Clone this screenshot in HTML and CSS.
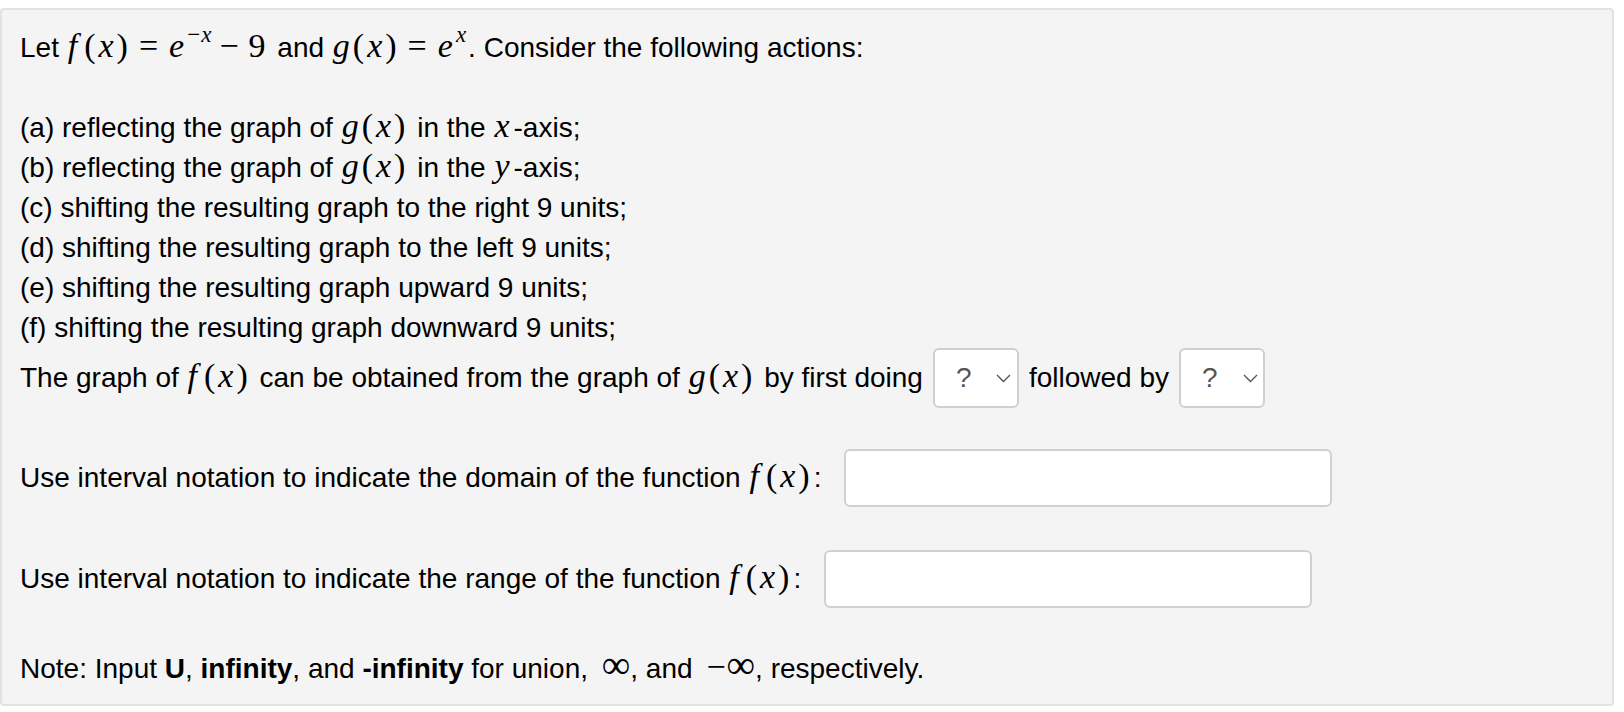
FILE: index.html
```html
<!DOCTYPE html>
<html>
<head>
<meta charset="utf-8">
<link rel="stylesheet" href="styles.css">
</head>
<body>
<div class="panel">
  <div class="line">Let <span class="m"><i class="f">f</i>(<i>x</i>)<span class="rel">=</span><i>e</i><sup>−<i>x</i></sup><span class="bin">−</span>9</span> and <span class="m"><i>g</i>(<i>x</i>)<span class="rel">=</span><i>e</i><sup><i>x</i></sup></span>. Consider the following actions:</div>
  <div class="list">
    <div class="line">(a) reflecting the graph of <span class="m"><i>g</i>(<i>x</i>)</span> in the <span class="m"><i>x</i></span>-axis;</div>
    <div class="line">(b) reflecting the graph of <span class="m"><i>g</i>(<i>x</i>)</span> in the <span class="m"><i>y</i></span>-axis;</div>
    <div class="line">(c) shifting the resulting graph to the right 9 units;</div>
    <div class="line">(d) shifting the resulting graph to the left 9 units;</div>
    <div class="line">(e) shifting the resulting graph upward 9 units;</div>
    <div class="line">(f) shifting the resulting graph downward 9 units;</div>
  </div>
  <div class="row select-row">
    <span>The graph of <span class="m"><i class="f">f</i>(<i>x</i>)</span> can be obtained from the graph of <span class="m"><i>g</i>(<i>x</i>)</span> by first doing</span>
    <div class="select"><span class="q">?</span><svg class="chev" width="15" height="9" viewBox="0 0 15 9"><path d="M1 1 L7.5 7.5 L14 1" fill="none" stroke="#555" stroke-width="1.4"/></svg></div>
    <span>followed by</span>
    <div class="select"><span class="q">?</span><svg class="chev" width="15" height="9" viewBox="0 0 15 9"><path d="M1 1 L7.5 7.5 L14 1" fill="none" stroke="#555" stroke-width="1.4"/></svg></div>
  </div>
  <div class="row input-row domain">
    <span>Use interval notation to indicate the domain of the function <span class="m"><i class="f">f</i>(<i>x</i>)</span>:</span>
    <div class="field"></div>
  </div>
  <div class="row input-row range">
    <span>Use interval notation to indicate the range of the function <span class="m"><i class="f">f</i>(<i>x</i>)</span>:</span>
    <div class="field"></div>
  </div>
  <div class="line note">Note: Input <b>U</b>, <b>infinity</b>, and <b>-infinity</b> for union, <span class="m inf">∞</span>, and <span class="m inf"><span class="neg">−</span>∞</span>, respectively.</div>
</div>
</body>
</html>
```
FILE: styles.css
```css
html, body {
  background: #ffffff;
}
body {
  margin: 8px 10px 6px 0;
  font-family: "Liberation Sans", Arial, sans-serif;
  font-size: 28px;
  color: #000;
}
.panel {
  background: #f4f4f4;
  border: 2px solid #e2e2e2;
  border-radius: 4px;
  padding: 18px 18px 16px 18px;
  height: 698px;
  box-sizing: border-box;
}
.line {
  line-height: 40px;
  white-space: nowrap;
}
.list {
  margin-top: 40px;
}
.m {
  font-family: "Liberation Serif", "Times New Roman", serif;
  font-size: 34px;
  line-height: 0;
  letter-spacing: 3px;
  margin: 0 1px;
}
.m i {
  font-style: italic;
}
.m i.f {
  margin-right: 4px;
}
.m sup {
  font-size: 23px;
  letter-spacing: 1px;
  vertical-align: 0;
  position: relative;
  top: -15px;
}
.rel {
  margin: 0 8px;
}
.bin {
  margin: 0 7px;
}
.inf {
  font-size: 40px;
  letter-spacing: 0;
  margin: 0 0 0 6px;
}
.neg {
  margin-right: 1px;
  font-size: 34px;
}
.row {
  display: flex;
  align-items: center;
  gap: 10px;
  white-space: nowrap;
}
.select-row {
  height: 60px;
}
.select {
  width: 86px;
  height: 60px;
  box-sizing: border-box;
  background: #fff;
  border: 2px solid #cfcfcf;
  border-radius: 6px;
  display: flex;
  align-items: center;
  padding-left: 21px;
  gap: 25px;
}
.q {
  color: #555;
  font-size: 28px;
}
.input-row {
  height: 59px;
  gap: 23px;
}
.domain {
  margin-top: 40px;
}
.range {
  margin-top: 42px;
}
.field {
  width: 488px;
  height: 58px;
  box-sizing: border-box;
  background: #fff;
  border: 2px solid #d0d0d0;
  border-radius: 6px;
}
.note {
  margin-top: 41px;
}
b {
  font-weight: bold;
}
```
